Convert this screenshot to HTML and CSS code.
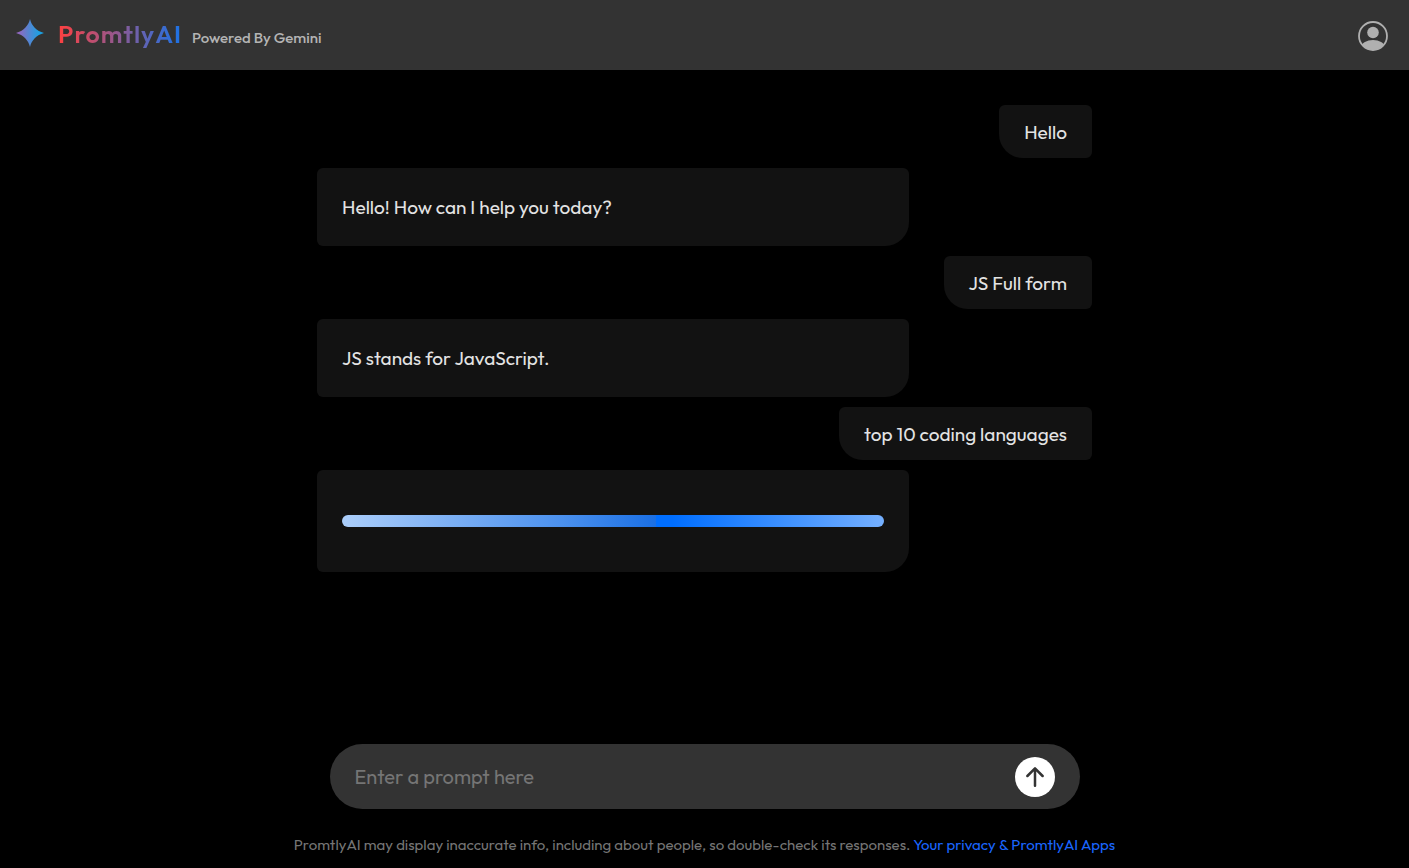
FILE: index.html
```html
<!DOCTYPE html>
<html lang="en">
<head>
<meta charset="utf-8">
<meta name="viewport" content="width=device-width, initial-scale=1">
<title>PromtlyAI</title>
<link rel="stylesheet" href="styles.css">
</head>
<body>
<header class="topbar">
  <div class="brand">
    <svg class="brand-star" viewBox="0 0 28 28" aria-hidden="true">
      <defs>
        <linearGradient id="star" x1="0" y1="0" x2="1" y2="0">
          <stop offset="0.1" stop-color="#9168c0"/>
          <stop offset="0.45" stop-color="#5684d1"/>
          <stop offset="0.85" stop-color="#1ba1e3"/>
        </linearGradient>
      </defs>
      <path fill="url(#star)" d="M14 0C15.5 6.500 20.500 12 28 14C20.500 16 15.500 21.500 14 28C12.500 21.500 7.500 16 0 14C7.500 12 12.500 6.500 14 0Z"/>
    </svg>
    <h1 class="brand-name">PromtlyAI</h1>
    <p class="brand-note">Powered By Gemini</p>
  </div>
  <button class="profile" type="button" aria-label="Profile">
    <svg viewBox="0 0 30 30" aria-hidden="true">
      <defs><clipPath id="face"><circle cx="15" cy="15" r="14"/></clipPath></defs>
      <circle cx="15" cy="15" r="14" fill="none" stroke="currentColor" stroke-width="1.800"/>
      <circle cx="15" cy="11.500" r="5.800" fill="currentColor"/>
      <ellipse cx="15" cy="26" rx="11.500" ry="7" fill="currentColor" clip-path="url(#face)"/>
    </svg>
  </button>
</header>
<main class="chat">
  <p class="message user">Hello</p>
  <p class="message bot">Hello! How can I help you today?</p>
  <p class="message user">JS Full form</p>
  <p class="message bot">JS stands for JavaScript.</p>
  <p class="message user">top 10 coding languages</p>
  <div class="message bot loading" role="status" aria-label="Loading"><div class="loader"></div></div>
</main>
<footer class="composer">
  <form class="prompt">
    <input class="prompt-input" type="text" placeholder="Enter a prompt here" aria-label="Enter a prompt here">
    <button class="send" type="button" aria-label="Send">
      <svg viewBox="0 0 18 20" aria-hidden="true"><path d="M9 18.800V1.400M1.400 9L9 1.400L16.600 9" fill="none" stroke="#333" stroke-width="2.500" stroke-linecap="round" stroke-linejoin="round"/></svg>
    </button>
  </form>
  <p class="notice">PromtlyAI may display inaccurate info, including about people, so double-check its responses. <a href="#privacy">Your privacy &amp; PromtlyAI Apps</a></p>
</footer>
</body>
</html>
```
FILE: styles.css
```css
* { box-sizing: border-box; }

body {
  margin: 0;
  min-height: 100vh;
  display: flex;
  flex-direction: column;
  background: #000;
  color: #e3e3e3;
  font-family: Outfit, Lato, sans-serif;
}

h1, p { margin: 0; }

.topbar {
  display: flex;
  align-items: center;
  justify-content: space-between;
  min-height: 70px;
  padding: 1px 21px 0 16px;
  background: #333;
}

.brand {
  display: flex;
  align-items: baseline;
  padding-bottom: 4px;
}

.brand-star {
  width: 28px;
  height: 28px;
  align-self: center;
  margin: 0 14px 2px 0;
}

.brand-name {
  font-size: 25px;
  line-height: 36px;
  font-weight: 600;
  letter-spacing: 1px;
  background: linear-gradient(90deg, #ff4040, #1a73e8);
  -webkit-background-clip: text;
  background-clip: text;
  color: transparent;
}

.brand-note {
  margin-left: 10px;
  font-size: 15px;
  font-weight: 500;
  color: #b4b4b4;
}

.profile {
  display: flex;
  width: 30px;
  height: 30px;
  padding: 0;
  border: 0;
  background: none;
  color: #b0b0b0;
  cursor: pointer;
}

.profile svg { width: 100%; }

.chat {
  flex: 1;
  display: flex;
  flex-direction: column;
  align-items: flex-start;
  gap: 10px;
  width: 55%;
  margin: 0 auto;
  padding: 35px 0;
}

.message {
  background: #121212;
  font-size: 19px;
  line-height: 22px;
}

.user {
  align-self: flex-end;
  padding: 16px 25px 15px;
  border-radius: 6px 6px 6px 24px;
}

.bot {
  box-sizing: content-box;
  width: 70%;
  padding: 28px 25px;
  border-radius: 6px 6px 24px 6px;
}

.loading { padding: 45px 25px; }

.loader {
  height: 12px;
  border-radius: 6px;
  background: linear-gradient(90deg, #accefa, #4a90ee 41%, #1a6fe4 58%, #006eff 58%, #006eff 61%, #75b0ff);
}

.composer {
  display: flex;
  flex-direction: column;
  align-items: center;
  gap: 26px;
  padding: 0 16px 13px;
}

.prompt {
  display: flex;
  align-items: center;
  width: 100%;
  max-width: 750px;
  min-height: 65px;
  padding: 0 25px;
  border-radius: 33px;
  background: #333;
}

.prompt-input {
  flex: 1;
  min-width: 0;
  padding: 0;
  border: 0;
  outline: 0;
  background: none;
  color: #e3e3e3;
  font: inherit;
  font-size: 20px;
}

.prompt-input::placeholder { color: #757575; }

.send {
  display: flex;
  align-items: center;
  justify-content: center;
  width: 40px;
  height: 40px;
  padding: 0;
  border: 0;
  border-radius: 50%;
  background: #fff;
  cursor: pointer;
}

.send svg { width: 18px; }

.notice {
  font-size: 15px;
  line-height: 20px;
  color: #757575;
  text-align: center;
}

.notice a {
  color: #1a66ff;
  text-decoration: none;
}
```
